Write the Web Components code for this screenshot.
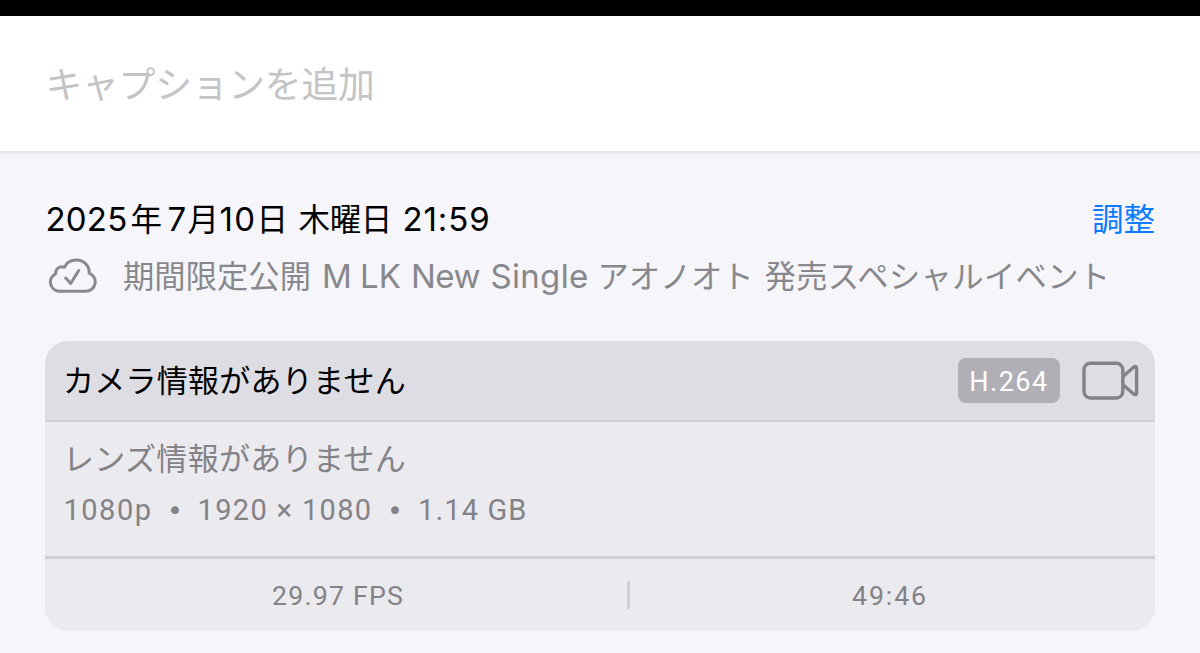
<!DOCTYPE html>
<html lang="ja">
<head>
<meta charset="utf-8">
<title>情報</title>
<style>
  html, body { margin: 0; height: 100%; }
  body {
    background: #f5f5fa;
    color: #000;
    font-family: Inter, "Noto Sans CJK JP", sans-serif;
    overflow: hidden;
  }
</style>
</head>
<body>
<photo-info>
  <caption-field slot="caption"><text-run size="36.8" fit="329">キャプションを追加</text-run></caption-field>

  <date-row slot="summary">
    <text-run size="33" fit="82">2025</text-run>
    <text-run size="31.5" fit="31" gap="3">年</text-run>
    <text-run size="33" fit="19" gap="6">7</text-run>
    <text-run size="31.5" fit="31" gap="1">月</text-run>
    <text-run size="33" fit="37" gap="1">10</text-run>
    <text-run size="31.5" fit="31" gap="0">日</text-run>
    <text-run size="31.5" fit="93.5" gap="11">木曜日</text-run>
    <text-run size="33" fit="88" gap="10.5">21:59</text-run>
    <text-run slot="action" size="31.5" fit="63">調整</text-run>
  </date-row>

  <file-row slot="summary">
    <text-run size="31.3" fit="188">期間限定公開</text-run>
    <text-run size="33" fit="27" gap="11">M</text-run>
    <text-run size="33" fit="41" gap="11">LK</text-run>
    <text-run size="33" fit="69" gap="10">New</text-run>
    <text-run size="33" fit="98" gap="10.5">Single</text-run>
    <text-run size="31.3" fit="156" gap="9">アオノオト</text-run>
    <text-run size="31.3" fit="346" gap="11">発売スペシャルイベント</text-run>
  </file-row>

  <camera-card>
    <text-run slot="camera" size="31" fit="343">カメラ情報がありません</text-run>
    <codec-badge slot="badges">H.264</codec-badge>
    <video-icon slot="badges"></video-icon>
    <text-run slot="lens" size="31" fit="343">レンズ情報がありません</text-run>
    <text-run slot="spec" size="29" fit="89" face="Roboto">1080p</text-run>
    <text-run slot="spec" size="27" cell="45" face="DejaVu Sans">•</text-run>
    <text-run slot="spec" size="29" fit="175" face="Roboto">1920 × 1080</text-run>
    <text-run slot="spec" size="27" cell="45" face="DejaVu Sans">•</text-run>
    <text-run slot="spec" size="29" fit="109.5" gap="0.5" face="Roboto">1.14 GB</text-run>
    <text-run slot="fps" size="26.7" fit="132" face="Roboto">29.97 FPS</text-run>
    <text-run slot="length" size="26.7" fit="76" face="Roboto">49:46</text-run>
  </camera-card>
</photo-info>

<script>
// one run of text: tracked so that it fills `fit` pixels, or centred in `cell` pixels
class TextRun extends HTMLElement {
  constructor() {
    super();
    this.attachShadow({ mode: "open" }).innerHTML = `
      <style>
        :host { display: block; flex: none; white-space: nowrap; }
        :host([cell]) { text-align: center; }
        span { display: inline-block; }
      </style>
      <span><slot></slot></span>
    `;
  }

  connectedCallback() {
    const fit = Number(this.getAttribute("fit"));
    const face = this.getAttribute("face");
    const span = this.shadowRoot.querySelector("span");
    this.style.fontSize = this.getAttribute("size") + "px";
    this.style.marginLeft = (this.getAttribute("gap") || 0) + "px";
    if (face) this.style.fontFamily = `"${face}", "Noto Sans CJK JP", sans-serif`;
    if (fit) {
      const natural = span.getBoundingClientRect().width;
      const count = [...this.textContent].length;
      span.style.letterSpacing = (fit - natural) / count + "px";
    }
    this.style.width = (fit || this.getAttribute("cell")) + "px";
  }
}

class PhotoInfo extends HTMLElement {
  constructor() {
    super();
    this.attachShadow({ mode: "open" }).innerHTML = `
      <style>
        :host { display: block; }
        .edge { height: 16px; background: #000; }
        .summary { padding: 45px 45px 0; }
        .card { padding: 42px 45px 0; }
      </style>
      <div class="edge"></div>
      <slot name="caption"></slot>
      <div class="summary"><slot name="summary"></slot></div>
      <div class="card"><slot></slot></div>
    `;
  }
}

class CaptionField extends HTMLElement {
  constructor() {
    super();
    this.attachShadow({ mode: "open" }).innerHTML = `
      <style>
        :host {
          display: flex; align-items: center; box-sizing: border-box;
          height: 138px; padding: 2px 45.5px 0;
          background: #fff; color: #c4c4c6;
          border-bottom: 3px solid #e8e8ea;
          line-height: 40px;
        }
      </style>
      <slot></slot>
    `;
  }
}

class DateRow extends HTMLElement {
  constructor() {
    super();
    this.attachShadow({ mode: "open" }).innerHTML = `
      <style>
        :host { display: flex; align-items: baseline; height: 40px; padding-left: 0.5px; line-height: 40px; }
        .action { margin-left: auto; color: #0a7aff; }
      </style>
      <slot></slot>
      <div class="action"><slot name="action"></slot></div>
    `;
  }
}

class FileRow extends HTMLElement {
  constructor() {
    super();
    this.attachShadow({ mode: "open" }).innerHTML = `
      <style>
        :host { display: flex; height: 60px; color: #88888c; line-height: 40px; }
        svg { flex: none; margin: 18.5px 26px 0 2px; }
        .name { display: flex; align-items: baseline; height: 40px; padding-top: 17px; }
      </style>
      <svg width="50" height="36" viewBox="0 0 50 36" fill="none" stroke="#8a8a8e" stroke-width="3" stroke-linecap="round" stroke-linejoin="round">
        <path d="M11.5 33.2H38.6A9.3 9.3 0 0 0 42.2 15.2C42.6 7.2 36.3 2 29.3 2C23.4 2 19.4 5 17.3 9.3C12.4 7.6 8.3 11 8.6 15.8A9.2 9.2 0 0 0 11.5 33.2Z"/>
        <path d="M18.7 20L23.7 25.5L31.7 12.5"/>
      </svg>
      <div class="name"><slot></slot></div>
    `;
  }
}

class CodecBadge extends HTMLElement {
  constructor() {
    super();
    this.attachShadow({ mode: "open" }).innerHTML = `
      <style>
        :host {
          display: block; box-sizing: border-box; width: 102px; height: 45px;
          border-radius: 8px; background: #b0afb5; color: #fff;
          font: 27px/48px Roboto, sans-serif; letter-spacing: 1.5px;
          text-align: center;
        }
      </style>
      <slot></slot>
    `;
  }
}

class VideoIcon extends HTMLElement {
  constructor() {
    super();
    this.attachShadow({ mode: "open" }).innerHTML = `
      <style>
        :host { display: block; width: 58px; height: 40px; }
        svg { display: block; }
      </style>
      <svg width="58" height="40" viewBox="0 0 58 40" fill="none" stroke="#838287" stroke-width="3.4" stroke-linejoin="round">
        <rect x="2" y="2.2" width="38.8" height="34.8" rx="6.5"/>
        <path d="M41 15.5L51.6 6.2Q54.6 4.4 54.6 7.4V31.8Q54.6 34.8 51.6 33L41 23.7"/>
      </svg>
    `;
  }
}

class CameraCard extends HTMLElement {
  constructor() {
    super();
    this.attachShadow({ mode: "open" }).innerHTML = `
      <style>
        :host {
          display: block; height: 290px; overflow: hidden;
          border-radius: 23px; background: #ebeaef; color: #838287;
        }
        .head {
          display: flex; align-items: center; box-sizing: border-box; height: 81px;
          padding: 0 15px 0 18px; background: #dedde3;
          border-bottom: 2px solid #cfced3; line-height: 40px;
        }
        .camera { color: #000; }
        .badges { display: flex; align-items: center; gap: 22px; margin-left: auto; }
        .body {
          box-sizing: border-box; height: 137px; padding: 17px 18px 0;
          border-bottom: 3px solid #d0cfd4; line-height: 40px;
        }
        .specs { display: flex; align-items: baseline; padding: 11px 0 0 0.5px; }
        .foot { display: grid; grid-template-columns: 582px 3px 1fr; align-items: center; height: 72px; }
        .foot > div { display: flex; justify-content: center; padding: 2px 0 0 4px; line-height: 40px; }
        .foot > div:last-child { padding: 2px 5px 0 0; }
        .rule { height: 28px; border-radius: 1px; background: #d0cfd4; }
      </style>
      <div class="head">
        <div class="camera"><slot name="camera"></slot></div>
        <div class="badges"><slot name="badges"></slot></div>
      </div>
      <div class="body">
        <slot name="lens"></slot>
        <div class="specs"><slot name="spec"></slot></div>
      </div>
      <div class="foot">
        <div><slot name="fps"></slot></div>
        <span class="rule"></span>
        <div><slot name="length"></slot></div>
      </div>
    `;
  }
}

customElements.define("photo-info", PhotoInfo);
customElements.define("caption-field", CaptionField);
customElements.define("date-row", DateRow);
customElements.define("file-row", FileRow);
customElements.define("codec-badge", CodecBadge);
customElements.define("video-icon", VideoIcon);
customElements.define("camera-card", CameraCard);
customElements.define("text-run", TextRun);
</script>
</body>
</html>
